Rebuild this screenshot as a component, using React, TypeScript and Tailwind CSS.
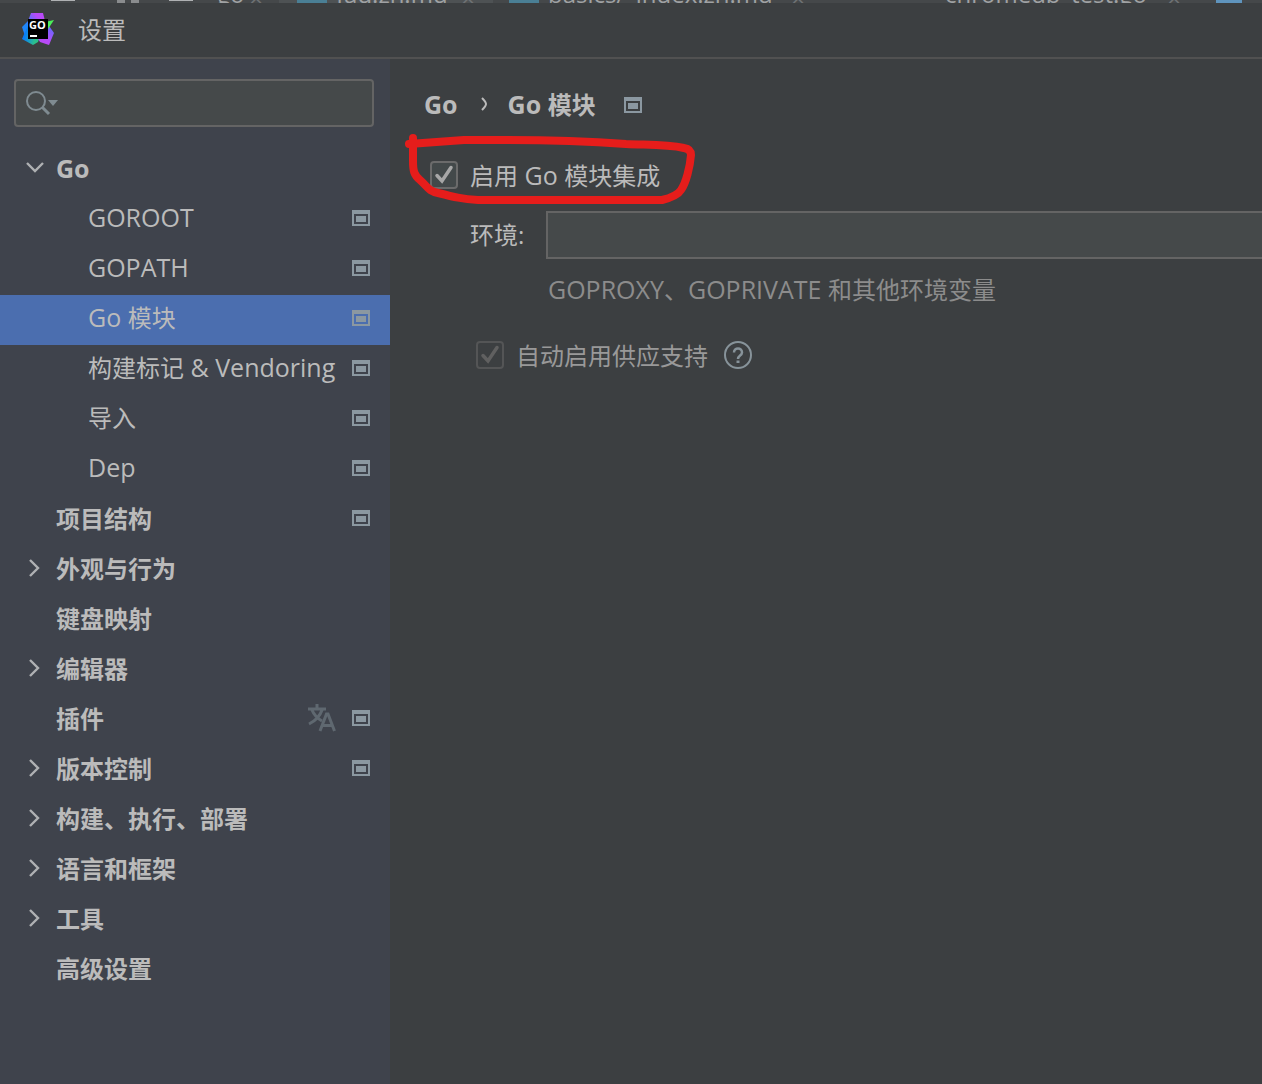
import React, { useState } from "react";

const ui = "font-['Open_Sans','Noto_Sans_CJK_SC',sans-serif]";

/* Sets Latin runs a step larger than the Chinese text around them. */
function Mixed({ text }: { text: string }) {
  return (
    <>
      {text.split(/([A-Za-z& ]+)/).map((part, i) =>
        i % 2 ? <span key={i} className="text-[25px] leading-8">{part}</span> : part
      )}
    </>
  );
}

function ProjectIcon({ className = "" }: { className?: string }) {
  return (
    <svg className={"shrink-0 " + className} width="18" height="16" viewBox="0 0 18 16" aria-hidden="true">
      <path fill="#8b98a1" fillRule="evenodd" d="M0 0h18v16H0zM2 4v10h14V4z" />
      <path fill="#8b98a1" d="M4 6h10v6H4z" />
    </svg>
  );
}

function Arrow({ open }: { open?: boolean }) {
  return (
    <svg width="20" height="20" viewBox="0 0 20 20" fill="none" stroke="#afb1b3" strokeWidth="2.4" aria-hidden="true">
      <path d={open ? "M3 5l8 8 8-8" : "M6 2l8 8-8 8"} />
    </svg>
  );
}

function TranslateIcon() {
  return (
    <svg className="shrink-0" width="28" height="28" viewBox="0 0 28 28" fill="none" stroke="#5f6870" strokeWidth="3" aria-hidden="true">
      <path d="M0 5h18M9 0v5M4 6c2 5 5 8 10 11M14 6C12 12 7 17 1 20" />
      <path d="M12 27L18.500 10h1.500L26.500 27M14 21.500h10.500" />
    </svg>
  );
}

function GoLandLogo() {
  return (
    <svg className="shrink-0" width="32" height="32" viewBox="0 0 32 32" role="img" aria-label="GoLand">
      <defs>
        <linearGradient id="gl-a" x1="0" y1="0.700" x2="0.900" y2="0">
          <stop offset="0.250" stopColor="#1f86fa" />
          <stop offset="0.750" stopColor="#b74af7" />
        </linearGradient>
        <linearGradient id="gl-b" x1="0" y1="0.300" x2="1" y2="0.500">
          <stop offset="0.150" stopColor="#087cfa" />
          <stop offset="0.650" stopColor="#2cc08c" />
        </linearGradient>
        <linearGradient id="gl-c" x1="0.300" y1="1" x2="0.900" y2="0">
          <stop offset="0.300" stopColor="#b74af7" />
          <stop offset="0.900" stopColor="#5a6dff" />
        </linearGradient>
      </defs>
      <path fill="url(#gl-a)" d="M9 0h12l2 8v16H3l-1-4-2-6 6-6z" />
      <path fill="url(#gl-b)" d="M0 26l3-7 3-6h16l-6 16-5 3z" />
      <path fill="url(#gl-c)" d="M25 10l7 10-5 12-9-3-3-5z" />
      <path fill="#4bf05a" d="M23 9l9-2-6 9z" />
      <path fill="#000" d="M6 6h20v20H6z" />
      <path fill="#fff" d="M8 22h7v2H8z" />
      <text x="7" y="16" fill="#fff" fontSize="11" fontWeight="700" fontFamily="Open Sans, sans-serif">GO</text>
    </svg>
  );
}

type Item = { label: string; level?: number; open?: boolean; group?: boolean; project?: boolean; translate?: boolean };

const items: Item[] = [
  { label: "Go", group: true, open: true },
  { label: "GOROOT", level: 1, project: true },
  { label: "GOPATH", level: 1, project: true },
  { label: "Go 模块", level: 1, project: true },
  { label: "构建标记 & Vendoring", level: 1, project: true },
  { label: "导入", level: 1, project: true },
  { label: "Dep", level: 1, project: true },
  { label: "项目结构", project: true },
  { label: "外观与行为", group: true },
  { label: "键盘映射" },
  { label: "编辑器", group: true },
  { label: "插件", project: true, translate: true },
  { label: "版本控制", group: true, project: true },
  { label: "构建、执行、部署", group: true },
  { label: "语言和框架", group: true },
  { label: "工具", group: true },
  { label: "高级设置" },
];

function Tree() {
  const [selected, setSelected] = useState("Go 模块");
  return (
    <nav aria-label="设置" className="mt-[18px]">
      <ul>
        {items.map((it) => (
          <li key={it.label}>
            <button
              type="button"
              onClick={() => setSelected(it.label)}
              aria-expanded={it.group ? !!it.open : undefined}
              aria-current={selected === it.label ? "page" : undefined}
              className={
                "flex h-[50px] w-full items-center pr-5 text-left " +
                (it.level ? "pb-[5px] pl-[88px] " : "pb-1 pl-6 font-bold ") +
                (selected === it.label ? "bg-[#4b6eaf]" : "")
              }
            >
              {!it.level && <span className="mr-3 w-5 shrink-0">{it.group && <Arrow open={it.open} />}</span>}
              <span className={"grow whitespace-nowrap " + (it.level || it.open ? "" : "pt-0.5")}><Mixed text={it.label} /></span>
              {it.translate && <TranslateIcon />}
              {it.project && <ProjectIcon className={it.translate ? "ml-4" : ""} />}
            </button>
          </li>
        ))}
      </ul>
    </nav>
  );
}

function CheckBox({ id, disabled }: { id: string; disabled?: boolean }) {
  return (
    <span className="relative grid size-7 shrink-0">
      <input
        id={id}
        type="checkbox"
        defaultChecked
        disabled={disabled}
        className="peer size-7 appearance-none rounded border-2 border-[#6b6b6b] bg-[#43494a] disabled:border-[#545556] disabled:bg-transparent"
      />
      <svg
        className="pointer-events-none absolute inset-0 hidden text-[#a7a7a7] peer-checked:block peer-disabled:text-[#606060]"
        width="28" height="28" viewBox="0 0 28 28" fill="none" stroke="currentColor" strokeWidth="3.500" aria-hidden="true"
      >
        <path d="M7 14.500l5 5.500L21 6.500" strokeLinecap="round" />
      </svg>
    </span>
  );
}

function EditorTab({ name, width, icon, pad }: { name: string; width: string; icon: string; pad: string }) {
  return (
    <span className={"flex h-[3px] shrink-0 items-end whitespace-nowrap " + width + " " + pad}>
      <span className={"mr-[9px] h-[3px] w-[30px] shrink-0 " + icon} />
      <span className="grow leading-[18px]">{name}</span>
      <span className="leading-[10px] text-[#6e7173]">×</span>
    </span>
  );
}

function EditorStrip() {
  return (
    <div className="flex h-[3px] items-start overflow-hidden bg-[#45484a] text-[#a0a2a4]" aria-hidden="true">
      <span className="ml-[51px] h-px w-6 shrink-0 bg-[#afb1b3]" />
      <span className="ml-[42px] h-[3px] w-2 shrink-0 bg-[#8a8c8e]" />
      <span className="ml-[6px] h-[3px] w-2 shrink-0 bg-[#8a8c8e]" />
      <span className="ml-[30px] h-px w-6 shrink-0 bg-[#afb1b3]" />
      <EditorTab name="go" width="w-[86px]" icon="hidden" pad="pl-6 pr-4" />
      <EditorTab name="faq.zh.md" width="w-[214px]" icon="bg-[#4a7f95]" pad="bg-[#4e5254] pl-[18px] pr-[18px]" />
      <EditorTab name="basics/_index.zh.md" width="w-[336px]" icon="bg-[#4a7f95]" pad="pl-4 pr-[24px]" />
      <EditorTab name="chromedp_test.go" width="w-[380px]" icon="bg-transparent" pad="pl-[77px] pr-[28px]" />
      <span className="ml-[7px] h-[3px] w-[26px] shrink-0 bg-[#5f94bd]" />
    </div>
  );
}

export default function App() {
  return (
    <div className={"flex min-h-screen flex-col overflow-hidden bg-[#3c3f41] text-2xl text-[#bbbbbb] " + ui}>
      <EditorStrip />
      <header className="flex h-14 items-center border-b-2 border-[#515151] pb-0.5 pl-[22px]">
        <GoLandLogo />
        <h1 className="ml-6 pt-0.5">设置</h1>
      </header>
      <div className="flex grow">
        <aside className="w-[390px] shrink-0 bg-[#3f434c] pt-5">
          <div className="pr-4 pl-[14px]">
            <label className="flex h-12 items-center rounded border-2 border-[#646464] bg-[#45494a] pl-[10px]">
              <svg className="shrink-0" width="34" height="26" viewBox="0 0 34 26" fill="none" stroke="#7f8b91" strokeWidth="2" aria-hidden="true">
                <circle cx="10" cy="11" r="9" />
                <path d="M16 17l7 7" strokeWidth="3" />
                <path d="M22 10h10l-5 6z" fill="#7f8b91" stroke="none" />
              </svg>
              <input type="search" aria-label="搜索" className="min-w-0 grow bg-transparent outline-none" />
            </label>
          </div>
          <Tree />
        </aside>
        <main className="min-w-0 grow pt-[22px] pl-[34px]">
          <nav aria-label="路径" className="flex h-12 items-center pb-0.5 font-bold">
            <a href="#go"><Mixed text="Go" /></a>
            <svg className="mx-5 shrink-0" width="10" height="16" viewBox="0 0 10 16" fill="none" stroke="#bbbbbb" strokeWidth="2" aria-hidden="true">
              <path d="M4 2q4 4 4 6t-4 6" />
            </svg>
            <span><Mixed text="Go 模块" /></span>
            <ProjectIcon className="mt-0.5 ml-7" />
          </nav>
          <div className="relative mt-[22px] flex h-12 items-center pl-[6px]">
            <CheckBox id="enable" />
            <label htmlFor="enable" className="ml-3"><Mixed text="启用 Go 模块集成" /></label>
            <svg className="pointer-events-none absolute -top-[18px] -left-[20px]" width="292" height="74" viewBox="0 0 292 74" fill="none" stroke="#e61d1b" strokeWidth="8" strokeLinecap="round" strokeLinejoin="round" aria-hidden="true">
              <path d="M9 5V28C9 38 10 42 16 47C24 54 24 58 34 60C50 64 58 66 74 67H258C266 65 274 62 277 57C282 50 286 34 287 22Q287 16 280 15C262 11 244 12 222 11C180 8 140 7 100 7H60L5 11" />
            </svg>
          </div>
          <div className="mt-3 flex items-center pl-[46px]">
            <label htmlFor="env" className="w-[76px] shrink-0">环境:</label>
            <input id="env" type="text" className="h-12 min-w-0 grow border-2 border-r-0 border-[#646464] bg-[#45494a] px-2 outline-none" />
          </div>
          <p className="mt-[14px] pl-[124px] text-[#8c8c8c]"><Mixed text="GOPROXY、GOPRIVATE 和其他环境变量" /></p>
          <div className="mt-[25px] flex h-12 items-center pl-[52px]">
            <CheckBox id="vendor" disabled />
            <label htmlFor="vendor" className="ml-3 pt-0.5 text-[#999999]">自动启用供应支持</label>
            <button type="button" aria-label="帮助" className="ml-4">
              <svg width="28" height="28" viewBox="0 0 28 28" fill="none" stroke="#87939a" strokeWidth="2" aria-hidden="true">
                <circle cx="14" cy="14" r="13" />
                <path d="M10 11.500c0-5.500 8-5.500 8 0 0 3-4 3-4 6.500" strokeWidth="2.500" />
                <path d="M14 19.500v2.500" strokeWidth="3" />
              </svg>
            </button>
          </div>
        </main>
      </div>
    </div>
  );
}
